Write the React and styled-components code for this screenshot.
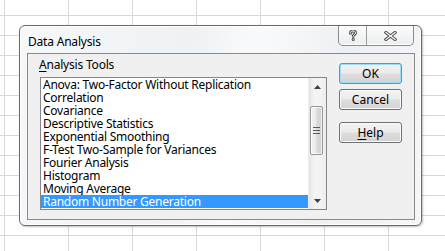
import React from "react";
import styled, { createGlobalStyle } from "styled-components";

const Global = createGlobalStyle`
  html, body { margin: 0; padding: 0; }
  body { width: 445px; height: 251px; overflow: hidden; background: #fff; }
  #root { width: 445px; height: 251px; }
`;

const Sheet = styled.div`
  width: 445px;
  height: 251px;
  box-sizing: border-box;
  padding: 25px 0 0 19px;
  background-color: #ffffff;
  background-image:
    linear-gradient(to right, #d8d8d8 1px, transparent 1px),
    linear-gradient(to bottom, #d8d8d8 1px, transparent 1px);
  background-size: 64px 20px;
  background-position: 4px 15px;
  font-family: "Noto Sans", "Open Sans", sans-serif;
  font-size: 12px;
  color: #000;
`;

const Window = styled.div`
  width: 403px;
  height: 201px;
  box-sizing: border-box;
  border: 1px solid #6a6a6a;
  border-radius: 6px;
  background: linear-gradient(100deg, #f6f8fa 0%, #eef2f5 40%, #f9fafb 55%, #eef1f4 75%, #f4f6f8 100%);
  box-shadow: inset 0 0 0 1px #ffffff, 1px 1px 2px rgba(0,0,0,0.25);
  display: flex;
  flex-direction: column;
  padding: 0 6px 5px 7px;
`;

const TitleBar = styled.div`
  height: 27px;
  display: flex;
  align-items: flex-start;
  justify-content: space-between;
  flex: none;
`;

const Title = styled.div`
  padding: 9px 0 0 1px;
  font-size: 12px;
  line-height: 14px;
  letter-spacing: -0.2px;
`;

const Caption = styled.div`
  display: flex;
  margin-right: 1px;
  height: 19px;
  border: 1px solid #8c8c8c;
  border-top: none;
  border-radius: 0 0 5px 5px;
  background: linear-gradient(#fbfbfb, #eceeef);
  box-shadow: inset 0 -1px 0 #ffffff;
  overflow: hidden;
`;

const CapBtn = styled.div`
  width: ${p => p.$w}px;
  height: 19px;
  display: flex;
  align-items: center;
  justify-content: center;
  border-left: ${p => (p.$first ? "none" : "1px solid #9a9a9a")};
`;

const Panel = styled.div`
  flex: 1;
  border: 1px solid #8a8a8a;
  background: #f0f0f0;
  display: flex;
  padding: 0 0 0 12px;
`;

const LeftCol = styled.div`
  display: flex;
  flex-direction: column;
  width: 287px;
`;

const Label = styled.div`
  height: 23px;
  line-height: 14px;
  padding-top: 4px;
  box-sizing: border-box;
  margin-left: -1px;
  letter-spacing: -0.2px;
  u { text-decoration: underline; text-underline-offset: 2px; }
`;

const ListBox = styled.div`
  width: 287px;
  height: 133px;
  box-sizing: border-box;
  border: 1px solid #82878f;
  background: #fff;
  display: flex;
`;

const Items = styled.div`
  flex: 1;
  display: flex;
  flex-direction: column;
`;

const Item = styled.div`
  height: 13px;
  line-height: 13px;
  padding-left: 2px;
  white-space: nowrap;
  letter-spacing: -0.25px;
  background: ${p => (p.$sel ? "#3399ff" : "transparent")};
  color: ${p => (p.$sel ? "#fff" : "#000")};
`;

const ScrollBar = styled.div`
  width: 17px;
  display: flex;
  flex-direction: column;
  align-items: center;
  background: linear-gradient(to right, #e6e6e6, #f3f3f3 30%, #f3f3f3 70%, #ececec);
  border-left: 1px solid #ededed;
`;

const Arrow = styled.div`
  height: 17px;
  width: 17px;
  display: flex;
  align-items: center;
  justify-content: center;
`;

const Track = styled.div`
  flex: 1;
  width: 100%;
  display: flex;
  flex-direction: column;
  align-items: flex-start;
  padding: 11px 0 0 1px;
  box-sizing: border-box;
`;

const Thumb = styled.div`
  width: 13px;
  height: 49px;
  box-sizing: border-box;
  border: 1px solid #979797;
  border-radius: 2px;
  background: linear-gradient(to right, #f4f4f4, #e9e9e9 45%, #d9d9d9 55%, #d2d2d2);
  box-shadow: inset 0 0 0 1px rgba(255,255,255,0.7);
  display: flex;
  align-items: center;
  justify-content: center;
`;

const RightCol = styled.div`
  display: flex;
  flex-direction: column;
  padding: 9px 0 0 12px;
`;

const Button = styled.div`
  width: 63px;
  height: 21px;
  box-sizing: border-box;
  margin-top: ${p => p.$mt || 0}px;
  border: 1px solid ${p => (p.$def ? "#3c9fe0" : "#707070")};
  border-radius: 3px;
  background: linear-gradient(#f3f3f3 0%, #ebebeb 45%, #dddddd 55%, #d3d3d3 100%);
  box-shadow: inset 0 0 0 1px ${p => (p.$def ? "#9fdcf8" : "#fbfbfb")};
  display: flex;
  align-items: center;
  justify-content: center;
  line-height: 14px;
  u { text-decoration: underline; text-underline-offset: 2px; }
`;

const items = [
  "Anova: Two-Factor Without Replication",
  "Correlation",
  "Covariance",
  "Descriptive Statistics",
  "Exponential Smoothing",
  "F-Test Two-Sample for Variances",
  "Fourier Analysis",
  "Histogram",
  "Moving Average",
  "Random Number Generation",
];

const QIcon = () => (
  <svg width="10" height="11" viewBox="0 0 10 11">
    <g fill="none" strokeLinecap="round" strokeLinejoin="round">
      <path d="M2.5 3.2 C2.5 1.6 3.6 1 5 1 C6.5 1 7.5 1.8 7.5 3 C7.5 4.4 5.2 4.6 5.2 6.3" stroke="#555" strokeWidth="3" />
      <path d="M5.2 9.3 L5.2 9.4" stroke="#555" strokeWidth="3" />
      <path d="M2.5 3.2 C2.5 1.6 3.6 1 5 1 C6.5 1 7.5 1.8 7.5 3 C7.5 4.4 5.2 4.6 5.2 6.3" stroke="#fff" strokeWidth="1" />
      <path d="M5.2 9.3 L5.2 9.4" stroke="#fff" strokeWidth="1" />
    </g>
  </svg>
);

const XIcon = () => (
  <svg width="13" height="10" viewBox="0 0 13 10">
    <g fill="none" strokeLinecap="square">
      <path d="M2 1.5 L11 8.5 M11 1.5 L2 8.5" stroke="#555" strokeWidth="3.2" />
      <path d="M2 1.5 L11 8.5 M11 1.5 L2 8.5" stroke="#fff" strokeWidth="1.2" />
    </g>
  </svg>
);

const UpArrow = () => (
  <svg width="7" height="4" viewBox="0 0 7 4"><path d="M0 4 L3.5 0 L7 4 Z" fill="#404040" /></svg>
);
const DownArrow = () => (
  <svg width="7" height="4" viewBox="0 0 7 4"><path d="M0 0 L7 0 L3.5 4 Z" fill="#404040" /></svg>
);
const Grip = () => (
  <svg width="7" height="7" viewBox="0 0 7 7">
    <path d="M0 0.5 H7 M0 3.5 H7 M0 6.5 H7" stroke="#5a5a5a" strokeWidth="1" />
  </svg>
);

export default function App() {
  return (
    <>
      <Global />
      <Sheet>
        <Window>
          <TitleBar>
            <Title>Data Analysis</Title>
            <Caption>
              <CapBtn $w={27} $first><QIcon /></CapBtn>
              <CapBtn $w={46}><XIcon /></CapBtn>
            </Caption>
          </TitleBar>
          <Panel>
            <LeftCol>
              <Label><u>A</u>nalysis Tools</Label>
              <ListBox>
                <Items>
                  {items.map((t, i) => (
                    <Item key={t} $sel={i === items.length - 1}>{t}</Item>
                  ))}
                </Items>
                <ScrollBar>
                  <Arrow><UpArrow /></Arrow>
                  <Track><Thumb><Grip /></Thumb></Track>
                  <Arrow><DownArrow /></Arrow>
                </ScrollBar>
              </ListBox>
            </LeftCol>
            <RightCol>
              <Button $def>OK</Button>
              <Button $mt={5}>Cancel</Button>
              <Button $mt={12}><span><u>H</u>elp</span></Button>
            </RightCol>
          </Panel>
        </Window>
      </Sheet>
    </>
  );
}
